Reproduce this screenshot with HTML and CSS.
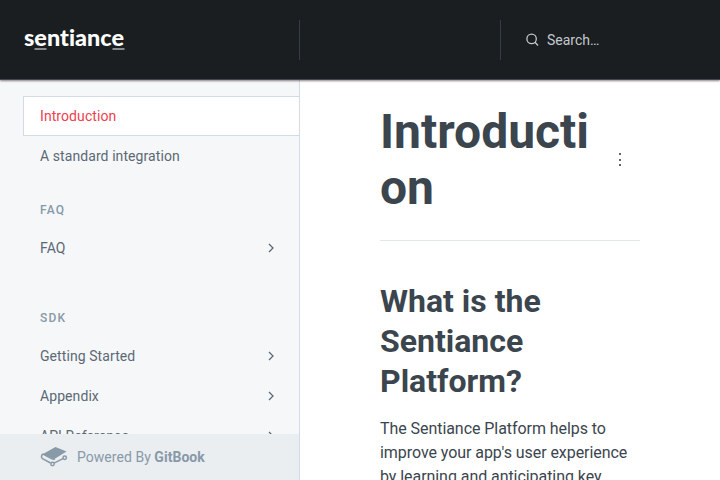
FILE: index.html
```html
<!DOCTYPE html>
<html lang="en">
<head>
<meta charset="utf-8">
<title>Introduction - Sentiance</title>
<link rel="stylesheet" href="styles.css">
</head>
<body>
<div class="app">
  <header class="header">
    <div class="brand">
      <svg class="logo" width="104" height="30" viewBox="0 0 104 30" role="img" aria-label="sentiance">
        <text x="0" y="21" textLength="100" lengthAdjust="spacingAndGlyphs">sentiance</text>
        <path class="underline" d="M10.500 24h12M88.500 24h12"/>
      </svg>
    </div>
    <div class="divider"></div>
    <div class="spacer"></div>
    <div class="divider"></div>
    <div class="search">
      <svg width="14" height="14" viewBox="0 0 14 14"><circle cx="5.600" cy="5.900" r="4.700"/><path d="M9 9.300L12 12.500"/></svg>
      <span>Search…</span>
    </div>
  </header>
  <div class="body">
    <aside class="sidebar">
      <nav class="nav">
        <a class="item active">Introduction</a>
        <a class="item">A standard integration</a>
        <h4 class="group">FAQ</h4>
        <a class="item">FAQ<svg class="chev" viewBox="0 0 6 10"><path d="M1 1l4 4-4 4"/></svg></a>
        <h4 class="group later">SDK</h4>
        <a class="item">Getting Started<svg class="chev" viewBox="0 0 6 10"><path d="M1 1l4 4-4 4"/></svg></a>
        <a class="item">Appendix<svg class="chev" viewBox="0 0 6 10"><path d="M1 1l4 4-4 4"/></svg></a>
        <a class="item">API Reference<svg class="chev" viewBox="0 0 6 10"><path d="M1 1l4 4-4 4"/></svg></a>
      </nav>
      <footer class="powered">
        <svg class="book" width="28" height="20" viewBox="0 0 28 20">
          <path class="cover" d="M15.500 0L26.500 4.500 14 12.300 3 7z"/>
          <path d="M3 7C1.200 8 .9 10.500 2.500 11.600L10.500 16M3 7L12 11.800Q13.500 12.600 15 11.800"/>
          <path d="M14 16.200L23 11.600"/>
          <circle cx="12.500" cy="17" r="1.700"/><circle cx="24.700" cy="10.800" r="1.700"/>
        </svg>
        <span>Powered By <b>GitBook</b></span>
      </footer>
    </aside>
    <main class="main">
      <div class="title-row">
        <h1>Introduction</h1>
        <svg class="more" width="40" height="16" viewBox="0 0 40 16"><path d="M19 1h2v2h-2zM19 7h2v2h-2zM19 12h2v2h-2z"/></svg>
      </div>
      <h2>What is the Sentiance Platform?</h2>
      <p>The Sentiance Platform helps to improve your app's user experience by learning and anticipating key moments in their everyday life.</p>
    </main>
  </div>
</div>
</body>
</html>
```
FILE: styles.css
```css
* { box-sizing: border-box; margin: 0; }
body { font-family: Roboto, sans-serif; color: #3b454e; background: #fff; }
.app { display: flex; flex-direction: column; height: 480px; overflow: hidden; }
.header { display: flex; flex: none; align-items: center; height: 80px; background: #1a1e21; border-bottom: 1px solid #45454f; box-shadow: 0 1px 2px rgba(60, 45, 50, .6); z-index: 1; }
.brand { width: 299px; padding-left: 24px; }
.logo { display: block; overflow: visible; fill: #fff; font: 900 22px Lato, sans-serif; font-variant-ligatures: none; }
.underline { stroke: #b0b0b0; stroke-width: 1.500; }
.divider { width: 1px; height: 40px; background: #343e48; }
.spacer { width: 200px; }
.search { display: flex; align-items: center; gap: 7px; padding-left: 25px; font-size: 14px; color: #c4c9cd; }
.search svg { fill: none; stroke: #c4c9cd; stroke-width: 1.300; }
.body { display: flex; flex: 1; min-height: 0; }
.sidebar { display: flex; flex-direction: column; width: 300px; background: #f5f7f9; border-right: 1px solid #d3dce6; }
.nav { flex: 1; min-height: 0; overflow: hidden; padding: 16px 0 0 23px; }
.item { display: flex; align-items: center; justify-content: space-between; height: 40px; padding: 0 25px 0 16px; border: 1px solid transparent; border-right: 0; font-size: 14px; letter-spacing: .08px; color: #5c6975; }
.active { background: #fff; border-color: #d3dce6; color: #ee3d4e; }
.chev { width: 6px; height: 10px; fill: none; stroke: #5c6975; stroke-width: 1.300; }
.group { margin-top: 24px; padding-left: 17px; height: 28px; font-size: 12px; line-height: 20px; font-weight: 500; letter-spacing: 1.200px; color: #8899a8; }
.later { margin-top: 40px; }
.powered { display: flex; flex: none; align-items: center; gap: 9px; height: 46px; padding-left: 40px; background: #eaeef1; color: #8899a8; font-size: 14px; letter-spacing: .04px; }
.book { fill: none; stroke: #8899a8; stroke-width: 1.500; }
.cover { fill: #8899a8; stroke: none; }
.main { flex: 1; padding: 24px 80px 0; }
.title-row { display: flex; align-items: center; padding-bottom: 24px; height: 137px; border-bottom: 1px solid #e1e6ea; }
h1 { width: 220px; font-size: 48px; line-height: 56px; font-weight: 700; overflow-wrap: anywhere; }
.more { fill: #5c6975; }
h2 { margin: 40px 0 16px; font-size: 32px; line-height: 40px; font-weight: 700; }
p { font-size: 16px; line-height: 24px; letter-spacing: -.06px; }
```
